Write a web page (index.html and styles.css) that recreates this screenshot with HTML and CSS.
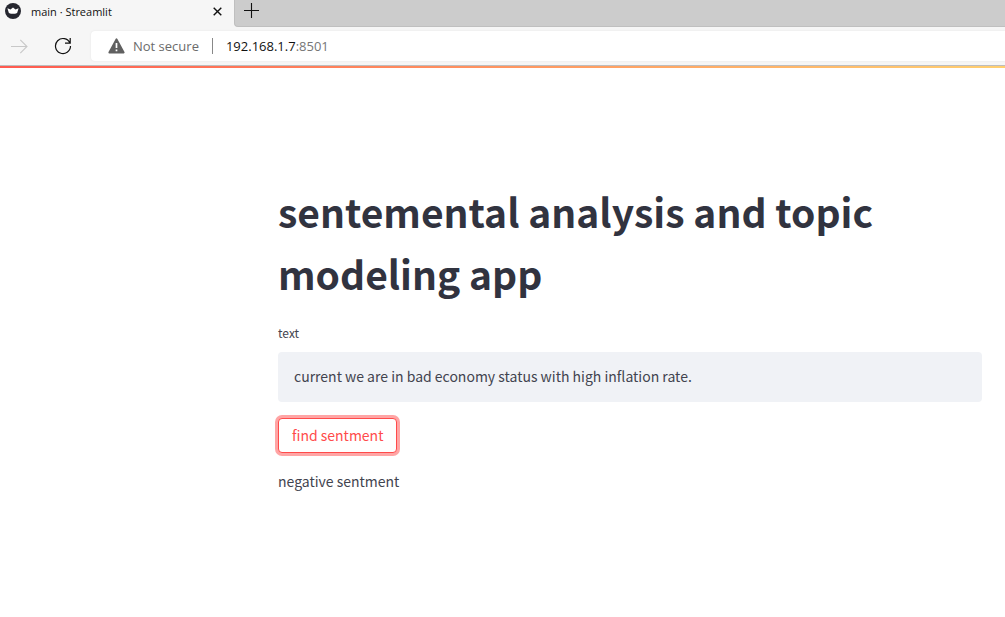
FILE: index.html
```html
<!DOCTYPE html>
<html lang="en">
<head>
<meta charset="utf-8">
<meta name="viewport" content="width=device-width, initial-scale=1">
<title>main · Streamlit</title>
<link rel="stylesheet" href="styles.css">
</head>
<body>
<header class="browser">
  <div class="tab-strip">
    <div class="tab">
      <svg class="tab-logo" viewBox="0 0 16 16" aria-hidden="true">
        <circle cx="8" cy="8" r="8" fill="#262730"/>
        <path d="M2.4 5.2 5.5 6.6 8 4.6l2.5 2 3.1-1.4-1.5 4.7Q8 11.6 3.9 9.9Z" fill="#fff"/>
      </svg>
      <span class="tab-title">main · Streamlit</span>
      <button class="icon-button tab-close" type="button" aria-label="Close tab">
        <svg width="9" height="9" viewBox="0 0 9 9"><path d="M.7.7 8.3 8.3M8.3.7.7 8.3" stroke="#111" stroke-width="1.4"/></svg>
      </button>
    </div>
    <div class="strip-rest">
      <button class="icon-button" type="button" aria-label="New tab">
        <svg width="15" height="15" viewBox="0 0 15 15"><path d="M7.5 0v15M0 7.5h15" stroke="#111" stroke-width="1.1"/></svg>
      </button>
    </div>
  </div>
  <div class="toolbar">
    <button class="icon-button" type="button" aria-label="Forward" disabled>
      <svg width="17" height="15" viewBox="0 0 17 15"><path d="M0 7.5h16M9.3.8 16 7.5 9.3 14.2" fill="none" stroke="#c8c8c8" stroke-width="1.1"/></svg>
    </button>
    <button class="icon-button reload" type="button" aria-label="Reload">
      <svg width="18" height="18" viewBox="0 0 18 18"><path d="M15.9 6.1A7.5 7.5 0 1 0 16.5 9M16.2 1v5.2H11" fill="none" stroke="#111" stroke-width="1.2"/></svg>
    </button>
    <div class="address">
      <svg width="17" height="16" viewBox="0 0 17 16" aria-hidden="true">
        <path d="M8.5 1.3 15.7 14.5H1.3Z" fill="#606060" stroke="#606060" stroke-width="1.8" stroke-linejoin="round"/>
        <path d="M8.5 5v5M8.5 11.4v1.8" stroke="#fff" stroke-width="1.7"/>
      </svg>
      <span class="security">Not secure</span>
      <span class="divider"></span>
      <span class="url">192.168.1.7<span class="port">:8501</span></span>
    </div>
  </div>
</header>
<div class="decoration"></div>
<main class="app">
  <h1 class="title">sentemental analysis and topic modeling app</h1>
  <label class="label" for="text">text</label>
  <input class="text-input" id="text" type="text" value="current we are in bad economy status with high inflation rate.">
  <button class="find" type="button">find sentment</button>
  <p class="result">negative sentment</p>
</main>
</body>
</html>
```
FILE: styles.css
```css
* {
  box-sizing: border-box;
}

body {
  margin: 0;
  background: #fff;
  color: #42444f;
  font-family: "Noto Sans CJK SC", "Open Sans", sans-serif;
  font-size: 14px;
}

.browser {
  background: #f6f6f6;
  border-bottom: 1px solid #bdbdbd;
  font-family: "Open Sans", "Noto Sans", sans-serif;
}

.tab-strip {
  display: flex;
  height: 27px;
}

.tab {
  display: flex;
  align-items: center;
  width: 234px;
  padding: 0 12px 5px 5px;
}

.tab-logo {
  width: 16px;
  height: 16px;
  margin-right: 10px;
}

.tab-title {
  flex: 1;
  color: #111;
  font-size: 11px;
}

.icon-button {
  display: flex;
  padding: 0;
  border: 0;
  background: none;
}

.strip-rest {
  display: flex;
  flex: 1;
  align-items: center;
  padding: 0 9px 5px;
  background: #ccc;
  border-bottom: 1px solid #bfbfbf;
  border-left: 1px solid #bfbfbf;
  border-bottom-left-radius: 4px;
}

.toolbar {
  display: flex;
  align-items: center;
  padding: 4px 0 4px 11px;
}

.reload {
  margin: 0 19px 0 26px;
}

.address {
  display: flex;
  flex: 1;
  align-items: center;
  height: 30px;
  padding-left: 17px;
  background: #fff;
  border-radius: 4px 0 0 4px;
  box-shadow: 0 0 2px #e2e2e2;
  font-size: 13px;
}

.security {
  margin-left: 8px;
  color: #6b6b6b;
}

.divider {
  width: 1px;
  height: 16px;
  margin: 0 13px;
  background: #888;
}

.url {
  color: #111;
}

.port {
  color: #767676;
}

.decoration {
  height: 2px;
  background: linear-gradient(90deg, #ff5a50, #ffcf70);
}

.app {
  display: flex;
  flex-direction: column;
  align-items: flex-start;
  max-width: 727px;
  margin-left: auto;
  padding: 112px 23px 40px 0;
}

.title {
  margin: 0 0 18px;
  color: #31333f;
  font-size: 39px;
  font-weight: 700;
  line-height: 62px;
}

.label {
  margin-bottom: 8px;
  font-size: 12px;
  line-height: 22px;
}

.text-input {
  width: 100%;
  height: 50px;
  padding: 0 16px 2px;
  border: 0;
  border-radius: 4px;
  background: #f0f2f6;
  color: inherit;
  font: inherit;
}

.find {
  height: 35px;
  margin-top: 16px;
  padding: 0 13px 1px;
  border: 1px solid #ff4b4b;
  border-radius: 4px;
  outline: 0;
  background: #fff;
  box-shadow: 0 0 0 3px #ffa5a5;
  color: #ff4b4b;
  font: inherit;
}

.result {
  margin: 16px 0 0;
  line-height: 24px;
}
```
